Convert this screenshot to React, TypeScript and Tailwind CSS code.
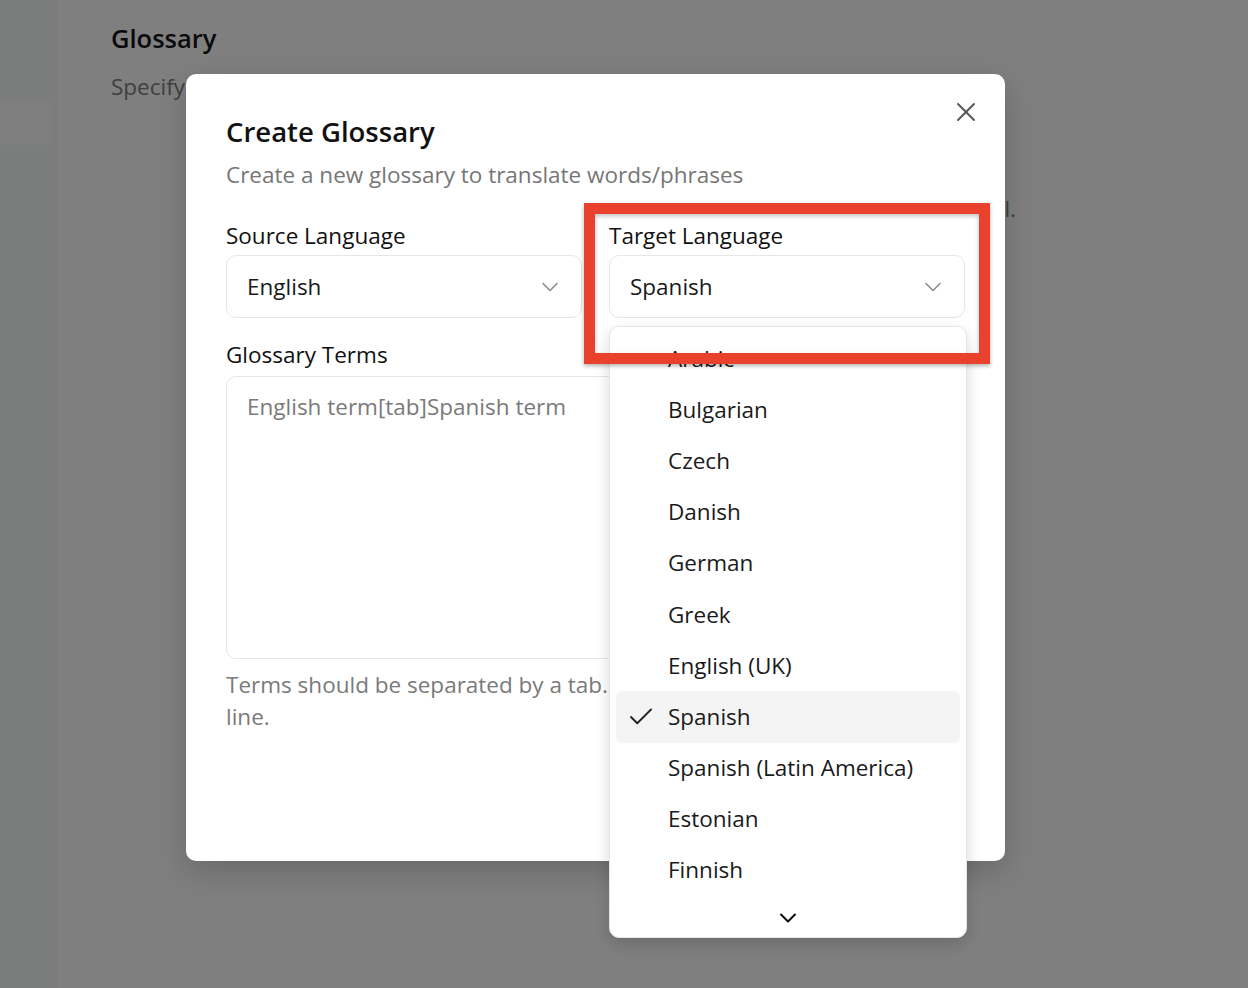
import { Check, ChevronDown, X } from "lucide-react";

const languages = [
  "Arabic",
  "Bulgarian",
  "Czech",
  "Danish",
  "German",
  "Greek",
  "English (UK)",
  "Spanish",
  "Spanish (Latin America)",
  "Estonian",
  "Finnish",
];

const SelectBox = ({ value }: { value: string }) => (
  <div className="flex h-[63px] items-center justify-between rounded-[10px] border border-[#e6e6e6] bg-white pl-[20px] pr-[17px]">
    <span className="text-[22.5px] leading-[30px] text-[#1a1a1a]">{value}</span>
    <ChevronDown size={28} strokeWidth={1.3} className="text-[#8a8a8a]" />
  </div>
);

const App = () => {
  return (
    <div className="relative h-[988px] w-full overflow-hidden bg-white font-['Open_Sans','Noto_Sans',sans-serif]">
      {/* page behind the modal */}
      <div className="flex h-full">
        <aside className="w-[58px] bg-[#f6f8f8] pt-[100px]">
          <div className="h-[45px] w-[52px] rounded-r-md bg-[#fefefe]" />
        </aside>
        <main className="flex-1 pl-[53px] pt-[22px]">
          <h1 className="text-[25.5px] font-semibold leading-[32px] text-[#141414]">Glossary</h1>
          <p className="mt-[18px] text-[22.5px] leading-[30px] text-[#808080]">
            Specify how words and phrases should be translated in your documents.
          </p>
          <p className="mt-[92px] w-[905px] text-right text-[22.5px] leading-[30px] text-[#808080]">
            Glossary terms are applied whenever a document is translated in this channel.
          </p>
        </main>
      </div>

      <div className="absolute inset-0 bg-black/50" />

      {/* dialog */}
      <div className="absolute left-[186px] top-[74px] h-[787px] w-[819px] rounded-[10px] bg-white px-[40px] pt-[40px] shadow-[0_10px_30px_rgba(0,0,0,0.18)]">
        <button className="absolute right-[23px] top-[22px] text-[#555]">
          <X size={32} strokeWidth={1.4} />
        </button>
        <h2 className="text-[27.5px] font-semibold leading-[36px] text-[#111]">Create Glossary</h2>
        <p className="mt-[11px] text-[22.5px] leading-[28px] text-[#767676]">
          Create a new glossary to translate words/phrases
        </p>

        <div className="mt-[33px] grid grid-cols-2 gap-x-[27px]">
          <div>
            <label className="block text-[22.5px] leading-[28px] text-[#111]">Source Language</label>
            <div className="mt-[5px]">
              <SelectBox value="English" />
            </div>
          </div>
          <div>
            <label className="block text-[22.5px] leading-[28px] text-[#111]">Target Language</label>
            <div className="mt-[5px]">
              <SelectBox value="Spanish" />
            </div>
          </div>
        </div>

        <label className="mt-[23px] block text-[22.5px] leading-[28px] text-[#111]">Glossary Terms</label>
        <div className="mt-[7px] h-[283px] rounded-[10px] border border-[#e6e6e6] px-[20px] pt-[16px]">
          <span className="text-[22.5px] leading-[28px] text-[#7a7a7a]">English term[tab]Spanish term</span>
        </div>
        <p className="mt-[10px] text-[22.5px] leading-[32px] text-[#7a7a7a]">
          Terms should be separated by a tab. Each pair should be on a new line.
        </p>

        <div className="mt-[40px] flex justify-end gap-3">
          <button className="h-[48px] rounded-lg border border-[#e6e6e6] px-6 text-[20px] text-[#111]">Cancel</button>
          <button className="h-[48px] rounded-lg bg-[#111] px-6 text-[20px] text-white">Create</button>
        </div>
      </div>

      {/* open select list */}
      <div className="absolute left-[609px] top-[326px] flex h-[612px] w-[358px] flex-col rounded-[10px] border border-[#e6e6e6] bg-white px-[6px] pt-[6px] shadow-[0_6px_16px_rgba(0,0,0,0.15)]">
        {languages.map((lang) => (
          <div
            key={lang}
            className={`relative flex h-[51.2px] shrink-0 items-center rounded-md pl-[52px] text-[22.5px] leading-[28px] text-[#1a1a1a] ${
              lang === "Spanish" ? "bg-[#f4f4f4]" : ""
            }`}
          >
            {lang === "Spanish" && (
              <Check size={30} strokeWidth={1.5} className="absolute left-[10px] top-1/2 -translate-y-1/2 text-[#222]" />
            )}
            <span>{lang}</span>
          </div>
        ))}
        <div className="flex flex-1 items-center justify-center pt-[2px]">
          <ChevronDown size={28} strokeWidth={1.8} className="text-[#111]" />
        </div>
      </div>

      {/* annotation box */}
      <div className="absolute left-[584px] top-[203px] h-[161px] w-[406px] border-[11px] border-[#e9412b] shadow-[0_2px_4px_rgba(0,0,0,0.3),inset_0_2px_4px_rgba(0,0,0,0.25)]" />
    </div>
  );
};

export default App;
